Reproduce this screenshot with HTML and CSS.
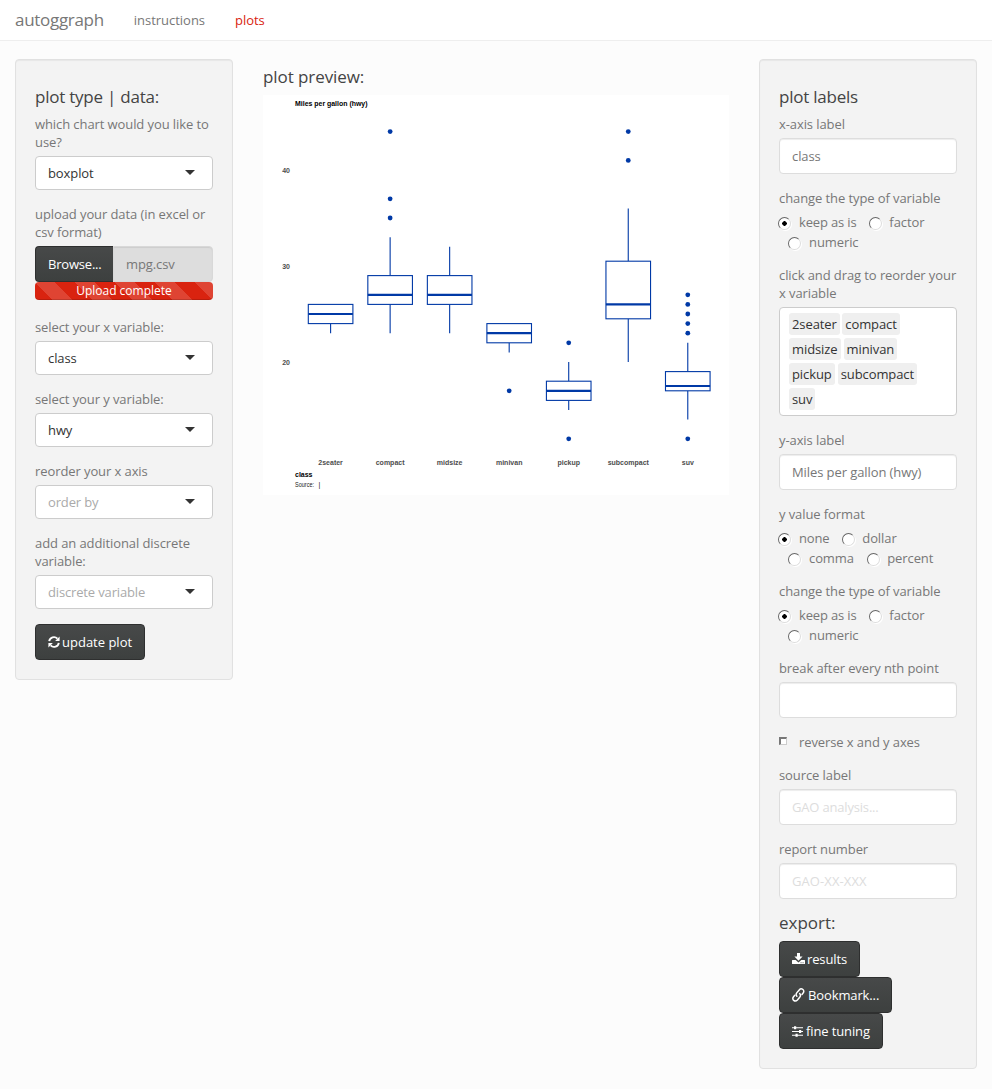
FILE: index.html
```html
<!DOCTYPE html>
<html lang="en">
<head>
<meta charset="utf-8">
<title>autoggraph</title>
<link rel="stylesheet" href="styles.css">
</head>
<body>
<nav class="navbar"><span class="brand">autoggraph</span><a class="nav-link">instructions</a><a class="nav-link active">plots</a></nav>
<main class="row">
  <section class="well">
    <h4>plot type | data:</h4>
    <div class="group"><label>which chart would you like to use?</label><div class="select">boxplot<i class="caret"></i></div></div>
    <div class="group upload"><label>upload your data (in excel or csv format)</label>
      <div class="file"><span class="browse">Browse...</span><span class="filename">mpg.csv</span></div>
      <div class="progress">Upload complete</div></div>
    <div class="group"><label>select your x variable:</label><div class="select">class<i class="caret"></i></div></div>
    <div class="group"><label>select your y variable:</label><div class="select">hwy<i class="caret"></i></div></div>
    <div class="group"><label>reorder your x axis</label><div class="select empty">order by<i class="caret"></i></div></div>
    <div class="group"><label>add an additional discrete variable:</label><div class="select empty">discrete variable<i class="caret"></i></div></div>
    <button class="btn update"><svg width="12" height="12" viewBox="0 0 12 12"><path d="M1.2 5.2A4.8 4.8 0 0 1 9.4 2.6M10.8 6.8A4.8 4.8 0 0 1 2.6 9.4" fill="none" stroke="#fff" stroke-width="1.9"/><path d="M11.6.5V5H7.1zM.4 11.5V7h4.5z" fill="#fff"/></svg><span>update plot</span></button>
  </section>

  <section class="preview">
    <h4>plot preview:</h4>
    <svg class="plot" id="plot" width="466" height="400" viewBox="0 0 466 400"></svg>
  </section>

  <section class="well">
    <h4>plot labels</h4>
    <div class="group"><label>x-axis label</label><div class="input">class</div></div>
    <div class="group radios"><label>change the type of variable</label>
      <div class="options"><span class="radio on">keep as is</span> <span class="radio">factor</span> <span class="radio">numeric</span></div></div>
    <div class="group"><label>click and drag to reorder your x variable</label>
      <div class="tags"><span>2seater</span><span>compact</span><span>midsize</span><span>minivan</span><span>pickup</span><span>subcompact</span><span>suv</span></div></div>
    <div class="group"><label>y-axis label</label><div class="input">Miles per gallon (hwy)</div></div>
    <div class="group radios"><label>y value format</label>
      <div class="options"><span class="radio on">none</span> <span class="radio">dollar</span> <span class="radio">comma</span> <span class="radio">percent</span></div></div>
    <div class="group radios"><label>change the type of variable</label>
      <div class="options"><span class="radio on">keep as is</span> <span class="radio">factor</span> <span class="radio">numeric</span></div></div>
    <div class="group"><label>break after every nth point</label><div class="input"></div></div>
    <div class="group check"><i class="box"></i>reverse x and y axes</div>
    <div class="group"><label>source label</label><div class="input empty">GAO analysis...</div></div>
    <div class="group"><label>report number</label><div class="input empty code">GAO-XX-XXX</div></div>
    <h4 class="export">export:</h4>
    <div class="buttons">
      <button class="btn results"><svg width="13" height="12" viewBox="0 0 13 12"><path d="M5 0h3v3.6h2.6L6.500 7.700 2.400 3.600H5z" fill="#fff"/><path fill-rule="evenodd" d="M.6 7h3.100l2.800 2.400L9.300 7h3.100q.6 0 .6.600v2.900q0 .600-.600.600H.600Q0 11.100 0 10.500V7.600Q0 7 .600 7zM8.600 9.300v.900h.900v-.900zm2 0v.900h.900v-.900z" fill="#fff"/></svg><span>results</span></button>
      <button class="btn bookmark"><svg width="13" height="14" viewBox="0 0 13 14" fill="none" stroke="#fff" stroke-width="1.500" stroke-linecap="round"><path d="M4.900 8.300C3.700 7 4 5.700 4.900 4.600L7.200 1.900C8.300.700 9.800.600 10.900 1.500S12.100 3.900 11.100 5.100L10 6.400"/><path d="M7.700 5.500C8.900 6.800 8.600 8.100 7.700 9.200L5.400 11.900C4.300 13.100 2.800 13.200 1.700 12.300S.500 9.900 1.500 8.700L2.600 7.400"/></svg><span>Bookmark...</span></button>
      <button class="btn tuning"><svg width="11" height="11" viewBox="0 0 11 11" fill="#fff"><path d="M0 1.200h11v1H0zM0 5h11v1H0zM0 8.800h11v1H0z"/><path d="M2 .200h2.200v3H2zM7 4h2.200v3H7zM3.500 7.800h2.200v3H3.500z"/></svg><span>fine tuning</span></button>
    </div>
  </section>
</main>
<script src="plot.js"></script>
</body>
</html>
```

FILE: styles.css
```css
* { box-sizing: border-box; }
body { margin: 0; min-height: 1089px; background: #fcfcfc; color: #777; font: 13px/18px "Open Sans", sans-serif; letter-spacing: -.09px; }
.navbar { display: flex; align-items: center; height: 41px; padding-left: 15px; background: #fff; border-bottom: 1px solid #eee; }
.brand { font-size: 17px; margin-right: 15px; letter-spacing: -.3px; }
.nav-link { padding: 0 15px; letter-spacing: -.03px; }
.nav-link.active { color: #d9230f; }
.row { display: flex; align-items: flex-start; justify-content: space-between; padding: 18px 15px 0; }
.well { width: 218px; padding: 19px; border: 1px solid #e1e1e1; border-radius: 4px; background: #f3f3f3; box-shadow: inset 0 1px 1px rgba(0,0,0,.05); }
h4 { margin: 9px 0; font-size: 17px; line-height: 18px; font-weight: 400; color: #444; letter-spacing: -.23px; }
.preview { width: 466px; }
.preview h4 { letter-spacing: -.08px; }
.plot { display: block; background: #fff; letter-spacing: 0; }
label { display: block; margin-bottom: 5px; }
.group { margin-bottom: 15px; }
.upload { margin-bottom: 18px; }
.radios { margin-bottom: 14px; }
.select { display: flex; align-items: center; justify-content: space-between; height: 34px; padding: 0 17px 0 12px; background: #fff; border: 1px solid #ccc; border-radius: 4px; color: #333; }
.select.empty { color: #aaa; letter-spacing: -.15px; }
.caret { border: 5px solid transparent; border-top-color: #333; border-bottom: 0; margin-top: -2px; }
.input { height: 36px; padding: 8px 12px; background: #fff; border: 1px solid #ddd; border-radius: 4px; box-shadow: inset 0 1px 1px rgba(0,0,0,.075); }
.input.empty { color: #ddd; letter-spacing: -.18px; }
.input.code { letter-spacing: .1px; }
.file { display: flex; height: 36px; }
.browse { width: 78px; padding: 8px 0 0 12px; color: #fff; background: linear-gradient(#474949, #3d403f); border: 1px solid #2e2f2f; border-right: 0; border-radius: 4px 0 0 4px; letter-spacing: -.2px; }
.filename { flex: 1; padding: 8px 12px; background: #ddd; border: 1px solid #d8d8d8; border-radius: 0 4px 4px 0; box-shadow: inset 0 1px 1px rgba(0,0,0,.075); }
.progress { height: 18px; border-radius: 4px; text-align: center; color: #fff; font-size: 12px; letter-spacing: 0; background: #d9230f linear-gradient(45deg, rgba(255,255,255,.15) 25%, transparent 25%, transparent 50%, rgba(255,255,255,.15) 50%, rgba(255,255,255,.15) 75%, transparent 75%) 0 0 / 40px 40px; box-shadow: inset 0 -1px 0 rgba(0,0,0,.15); }
.btn { display: flex; align-items: center; height: 36px; padding: 0 12px; border: 1px solid #2e2f2f; border-radius: 4px; background: linear-gradient(#474949, #3d403f); color: #fff; font: inherit; letter-spacing: -.12px; white-space: nowrap; }
.btn svg { flex: none; }
.update { width: 110px; gap: 2px; letter-spacing: 0; }
.results { width: 81px; gap: 2px; }
.bookmark { width: 113px; gap: 3px; }
.tuning { width: 104px; gap: 3px; }
.options { line-height: 20px; }
.radio { position: relative; display: inline-block; padding-left: 20px; margin-left: 10px; }
.radio:first-child { margin: 0 -.5px 0 0; letter-spacing: -.15px; }
.radio::before { content: ""; position: absolute; left: -.6px; top: 5px; width: 11px; height: 11px; border-radius: 50%; border: 1px solid; border-color: #666 #ddd #ddd #666; background: #fff; box-shadow: 1px 1px 0 #fff; }
.radio.on::before { background: radial-gradient(circle, #000 0 2px, #fff 2.500px); }
.check { display: flex; }
.box { width: 8px; height: 8px; margin: 4px 12px 0 0; border: 1px solid; border-width: 2px 1px 1px 2px; border-color: #777 #ccc #ccc #777; background: #fff; }
.tags { display: flex; flex-wrap: wrap; align-content: flex-start; gap: 3px; height: 109px; padding: 5px 24px 5px 9px; background: #fff; border: 1px solid #ccc; border-radius: 4px; color: #333; }
.tags span { height: 22px; padding: 2px 3px; border-radius: 3px; background: #efefef; }
.tags span:first-child { margin-right: -.5px; }
h4.export { margin-top: 0; letter-spacing: 0; }
.plot text { font: 7px "Liberation Sans", Arial, sans-serif; fill: #222; }
.plot .tick { font-weight: 700; fill: #4d4d4d; }
.plot .name { font-weight: 700; fill: #000; }
.plot .line { fill: #fff; stroke: #0039a6; stroke-width: 1.100px; }
.plot .median { stroke: #0039a6; stroke-width: 2.200px; }
.plot .dot { fill: #0039a6; }
```

FILE: plot.js
```js
const data = [
  ["2seater", 23, 24, 25, 26, 26, []],
  ["compact", 23, 26, 27, 29, 33, [35, 37, 44]],
  ["midsize", 23, 26, 27, 29, 32, []],
  ["minivan", 21, 22, 23, 24, 24, [17]],
  ["pickup", 15, 16, 17, 18, 20, [12, 22]],
  ["subcompact", 20, 24.5, 26, 30.5, 36, [41, 44]],
  ["suv", 14, 17, 17.5, 19, 22, [12, 23, 24, 25, 26, 27]]
];
const y = v => 267 - (v - 20) * 9.6;
let out = '<text class="name" x="32" y="11" textLength="72.500" lengthAdjust="spacingAndGlyphs">Miles per gallon (hwy)</text>';
for (const v of [20, 30, 40]) out += `<text class="tick" x="27" y="${y(v) + 3}" text-anchor="end">${v}</text>`;
data.forEach(([name, lo, q1, med, q3, hi, dots], i) => {
  const x = 67.600 + i * 59.530, l = x - 22.300, r = x + 22.300;
  out += `<path class="line" d="M${x} ${y(lo)}V${y(q1)}M${x} ${y(q3)}V${y(hi)}"/>`;
  out += `<rect class="line" x="${l}" y="${y(q3)}" width="44.600" height="${y(q1) - y(q3)}"/>`;
  out += `<path class="median" d="M${l} ${y(med)}H${r}"/>`;
  for (const v of dots) out += `<circle class="dot" cx="${x}" cy="${y(v)}" r="2.400"/>`;
  out += `<text class="tick" x="${x}" y="370" text-anchor="middle">${name}</text>`;
});
out += '<text class="name" x="32" y="382">class</text><text x="32" y="392" textLength="19" lengthAdjust="spacingAndGlyphs">Source:</text><text x="55.500" y="392">|</text>';
document.getElementById("plot").innerHTML = out;
```
